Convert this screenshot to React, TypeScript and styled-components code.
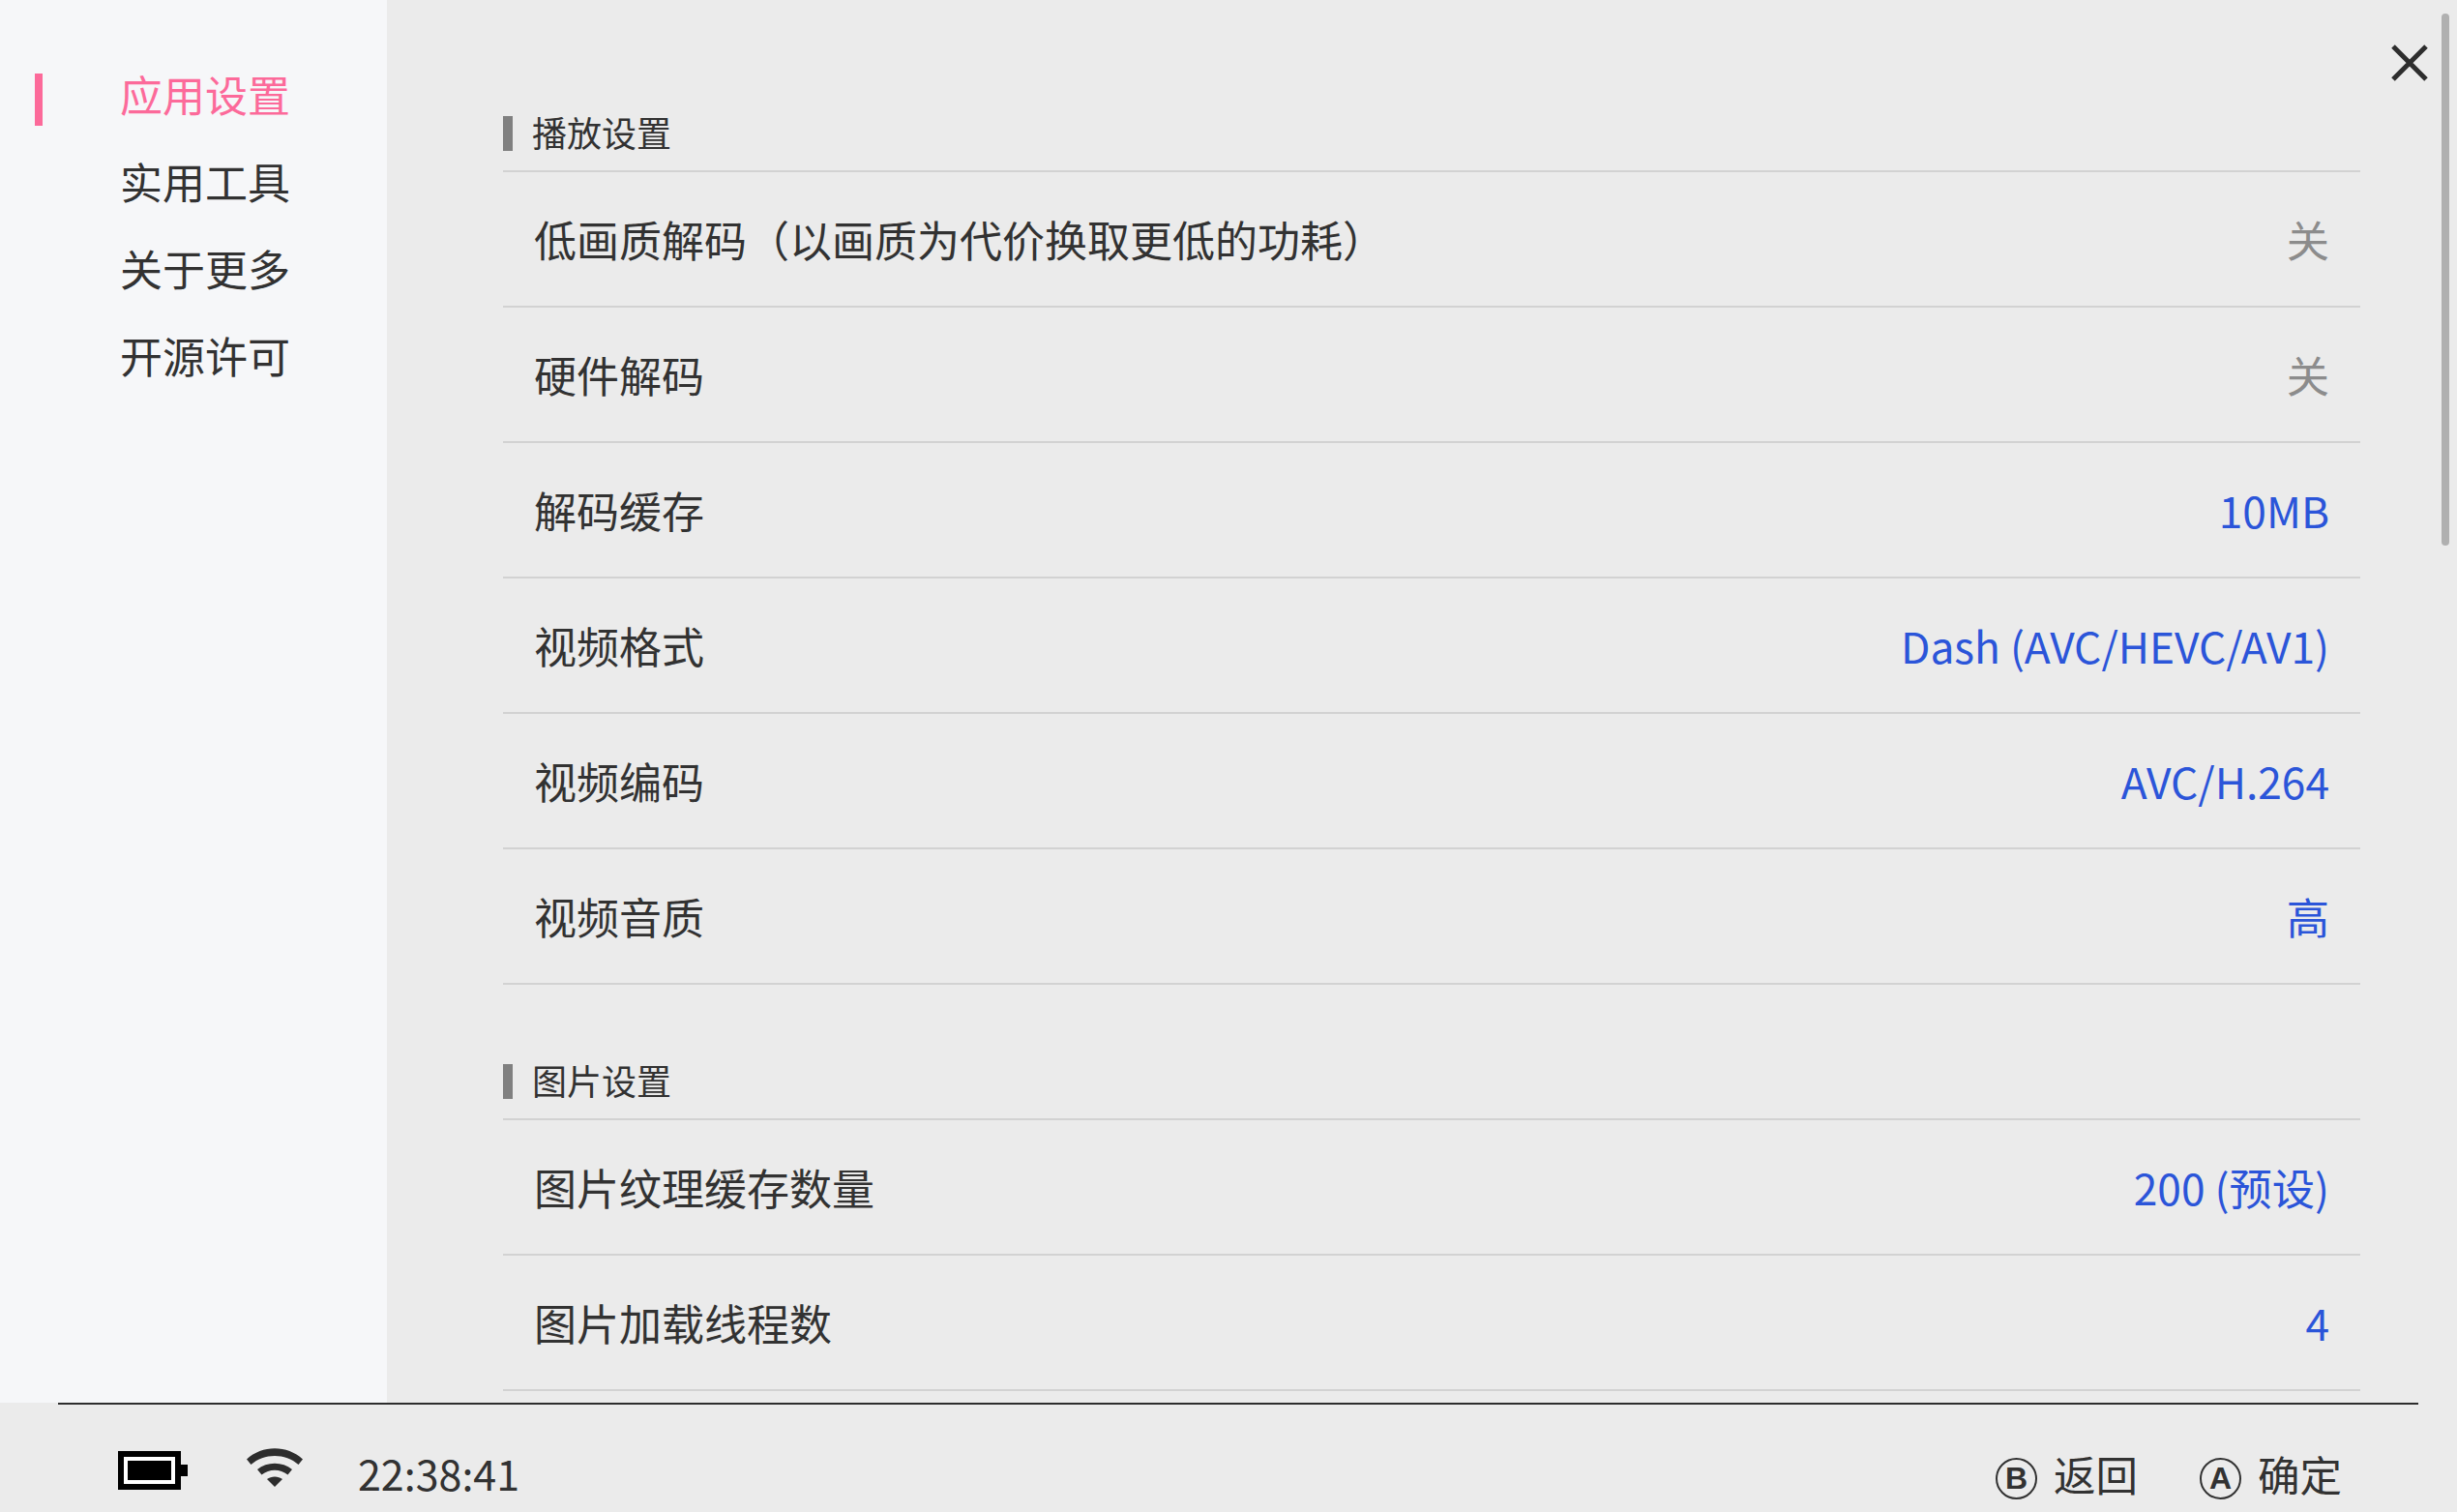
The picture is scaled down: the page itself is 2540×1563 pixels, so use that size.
import React, { FC } from 'react';
import styled, { createGlobalStyle } from 'styled-components';

const GlobalStyle = createGlobalStyle`
    html, body {
        margin: 0;
        padding: 0;
        background: #ebebeb;
    }
    body {
        font-family: "Noto Sans CJK SC", "Noto Sans", sans-serif;
        color: #323232;
    }
`;

const Page = styled.div`
    position: relative;
    width: 2540px;
    height: 1563px;
    overflow: hidden;
    display: flex;
    flex-direction: column;
    background: #ebebeb;
`;

const Body = styled.div`
    display: flex;
    height: 1450px;
    flex: none;
`;

const Sidebar = styled.nav`
    width: 400px;
    flex: none;
    box-sizing: border-box;
    padding-top: 52px;
    background: #f6f7f9;
`;

const NavItem = styled.div<{ $active?: boolean }>`
    position: relative;
    height: 90px;
    padding-left: 124px;
    font-size: 44px;
    line-height: 90px;
    color: ${(p) => (p.$active ? '#fc6a9a' : '#323232')};

    &::before {
        content: '';
        display: ${(p) => (p.$active ? 'block' : 'none')};
        position: absolute;
        left: 36px;
        top: 24px;
        width: 8px;
        height: 54px;
        background: #fc6a9a;
    }
`;

const Main = styled.main`
    flex: 1;
    min-width: 0;
    box-sizing: border-box;
    padding: 120px 100px 0 120px;
    overflow: hidden;
`;

const Section = styled.section`
    margin-bottom: 82px;
`;

const SectionTitle = styled.div`
    display: flex;
    align-items: flex-start;
    height: 36px;
    padding-bottom: 20px;
    font-size: 36px;
    line-height: 33px;
    border-bottom: 2px solid #d2d2d2;

    &::before {
        content: '';
        width: 10px;
        height: 36px;
        margin-right: 20px;
        background: #808080;
    }
`;

const Row = styled.div`
    display: flex;
    align-items: center;
    justify-content: space-between;
    box-sizing: border-box;
    height: 140px;
    padding: 0 32px;
    font-size: 44px;
    border-bottom: 2px solid #d2d2d2;
`;

const Value = styled.span<{ $off?: boolean }>`
    font-size: 44.3px;
    color: ${(p) => (p.$off ? '#8c8c8c' : '#2b55d9')};
`;

const CloseButton = styled.button`
    position: absolute;
    top: 45px;
    right: 29px;
    width: 40px;
    height: 40px;
    padding: 0;
    border: 0;
    background: none;
    color: #2d2d2d;
`;

const ScrollThumb = styled.div`
    position: absolute;
    top: 14px;
    left: 2524px;
    width: 8px;
    height: 550px;
    border-radius: 4px;
    background: #b0b0b0;
`;

const Footer = styled.footer`
    flex: 1;
    display: flex;
    flex-direction: column;
`;

const FooterRule = styled.div`
    height: 2px;
    margin: 0 40px 0 60px;
    background: #2d2d2d;
`;

const FooterBar = styled.div`
    flex: 1;
    display: flex;
    align-items: flex-start;
    justify-content: space-between;
    padding: 0 119px 0 122px;
`;

const Status = styled.div`
    display: flex;
    align-items: flex-start;
`;

const Battery = styled.svg`
    display: block;
    margin-top: 48px;
`;

const Wifi = styled.svg`
    display: block;
    margin: 45px 0 0 61px;
`;

const Clock = styled.span`
    margin: 40px 0 0 57px;
    font-size: 43px;
    line-height: 60px;
`;

const Hints = styled.div`
    display: flex;
    gap: 64px;
    margin-top: 41px;
`;

const Hint = styled.div`
    display: flex;
    align-items: center;
    gap: 17px;
    height: 60px;
    font-size: 43.5px;
`;

const KeyBadge = styled.span`
    display: flex;
    align-items: center;
    justify-content: center;
    box-sizing: border-box;
    width: 43px;
    height: 43px;
    margin-top: 11px;
    border: 2px solid #323232;
    border-radius: 50%;
    font-family: "Liberation Sans", sans-serif;
    font-size: 32px;
    font-weight: 700;
`;

type Setting = { label: string; value: string; off?: boolean };

const playback: Setting[] = [
    { label: '低画质解码（以画质为代价换取更低的功耗）', value: '关', off: true },
    { label: '硬件解码', value: '关', off: true },
    { label: '解码缓存', value: '10MB' },
    { label: '视频格式', value: 'Dash (AVC/HEVC/AV1)' },
    { label: '视频编码', value: 'AVC/H.264' },
    { label: '视频音质', value: '高' },
];

const images: Setting[] = [
    { label: '图片纹理缓存数量', value: '200 (预设)' },
    { label: '图片加载线程数', value: '4' },
];

const SettingsSection: FC<{ title: string; items: Setting[] }> = ({ title, items }) => (
    <Section>
        <SectionTitle>{title}</SectionTitle>
        {items.map((item) => (
            <Row key={item.label}>
                <span>{item.label}</span>
                <Value $off={item.off}>{item.value}</Value>
            </Row>
        ))}
    </Section>
);

export default function App() {
    return (
        <Page>
            <GlobalStyle />
            <Body>
                <Sidebar>
                    <NavItem $active>应用设置</NavItem>
                    <NavItem>实用工具</NavItem>
                    <NavItem>关于更多</NavItem>
                    <NavItem>开源许可</NavItem>
                </Sidebar>
                <Main>
                    <SettingsSection title="播放设置" items={playback} />
                    <SettingsSection title="图片设置" items={images} />
                </Main>
            </Body>
            <Footer>
                <FooterRule />
                <FooterBar>
                    <Status>
                        <Battery width="72" height="40" viewBox="0 0 72 40">
                            <path d="M0 0h65v40H0z" fill="#000" />
                            <path d="M6 6h53v28H6z" fill="#fff" />
                            <path d="M10 10h45v20H10z" fill="#000" />
                            <path d="M65 14h7v12h-7z" fill="#000" />
                        </Battery>
                        <Wifi width="58" height="40" viewBox="0 0 58 40">
                            <path d="M0 11.500C16 -3.500 42 -3.500 58 11.500L53.500 17C40 5 18 5 4.500 17Z" fill="#2d2d2d" />
                            <path d="M11 22C21 13.500 37 13.500 47 22L42.500 27.500C34.500 21 23.500 21 15.500 27.500Z" fill="#2d2d2d" />
                            <path d="M21 32C25.500 28.500 32.500 28.500 37 32L29 40Z" fill="#2d2d2d" />
                        </Wifi>
                        <Clock>22:38:41</Clock>
                    </Status>
                    <Hints>
                        <Hint>
                            <KeyBadge>B</KeyBadge>
                            返回
                        </Hint>
                        <Hint>
                            <KeyBadge>A</KeyBadge>
                            确定
                        </Hint>
                    </Hints>
                </FooterBar>
            </Footer>
            <CloseButton aria-label="关闭">
                <svg width="40" height="40" viewBox="0 0 40 40">
                    <path d="M3 3L37 37M37 3L3 37" stroke="currentColor" strokeWidth="5" fill="none" />
                </svg>
            </CloseButton>
            <ScrollThumb />
        </Page>
    );
}
